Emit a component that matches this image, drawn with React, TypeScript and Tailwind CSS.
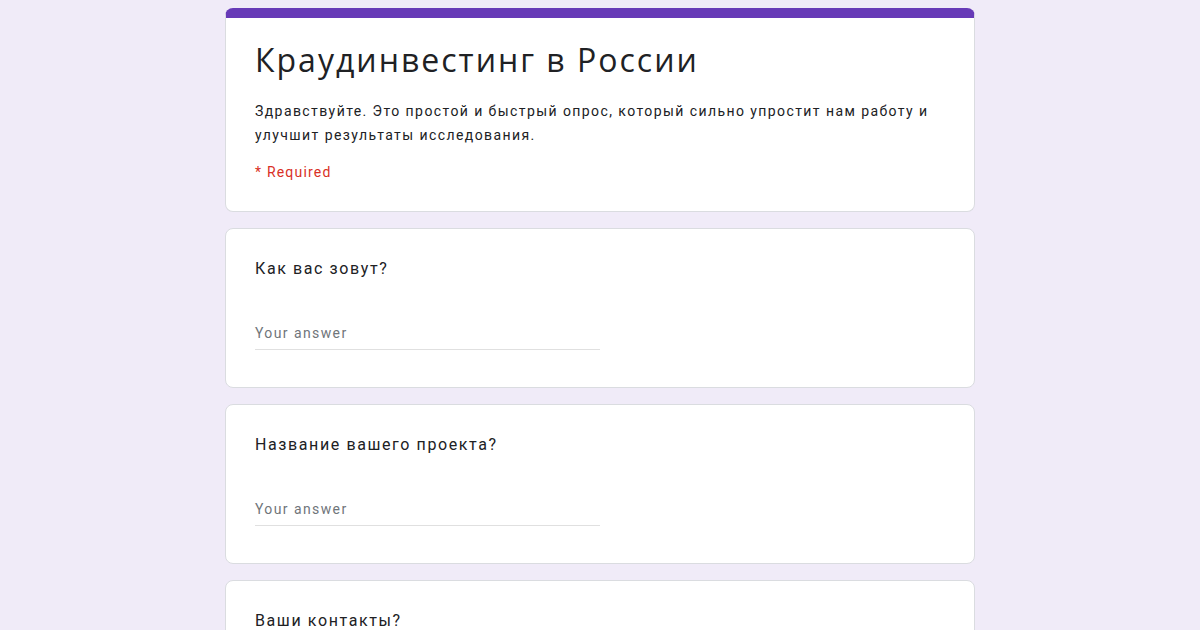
import React from "react";

function Question({ label }: { label: string }) {
  return (
    <div className="bg-white border border-[#dadce0] rounded-lg px-[29px] pt-[28px] pb-[37px]">
      <div className="text-[16px] leading-[24px] text-[#202124] tracking-[1.6px]">{label}</div>
      <div className="mt-[40px] w-[345px] border-b border-[#e0e0e0] pb-[4px]">
        <div className="text-[14px] leading-[24px] text-[#70757a] tracking-[1.4px]">Your answer</div>
      </div>
    </div>
  );
}

export default function App() {
  return (
    <div
      className="w-[1200px] h-[630px] overflow-hidden bg-[#f0ebf8]"
      style={{ fontFamily: "Roboto, 'Noto Sans', sans-serif" }}
    >
      <div className="w-[750px] mx-auto pt-[8px] flex flex-col gap-[16px]">
        <div className="bg-white border border-[#dadce0] border-t-[10px] border-t-[#673ab7] rounded-lg px-[29px] pt-[22px] pb-[27px]">
          <div
            className="text-[32px] leading-[40px] text-[#202124] tracking-[2px]"
            style={{ fontFamily: "'Open Sans', Roboto, sans-serif" }}
          >
            Краудинвестинг в России
          </div>
          <div className="mt-[19px] text-[14px] leading-[24px] text-[#202124] tracking-[1.42px] whitespace-nowrap">
            Здравствуйте. Это простой и быстрый опрос, который сильно упростит нам работу и
            <br />
            улучшит результаты исследования.
          </div>
          <div className="mt-[13px] text-[14px] leading-[24px] text-[#d93025] tracking-[1.2px]">
            * Required
          </div>
        </div>
        <Question label="Как вас зовут?" />
        <Question label="Название вашего проекта?" />
        <Question label="Ваши контакты?" />
      </div>
    </div>
  );
}
